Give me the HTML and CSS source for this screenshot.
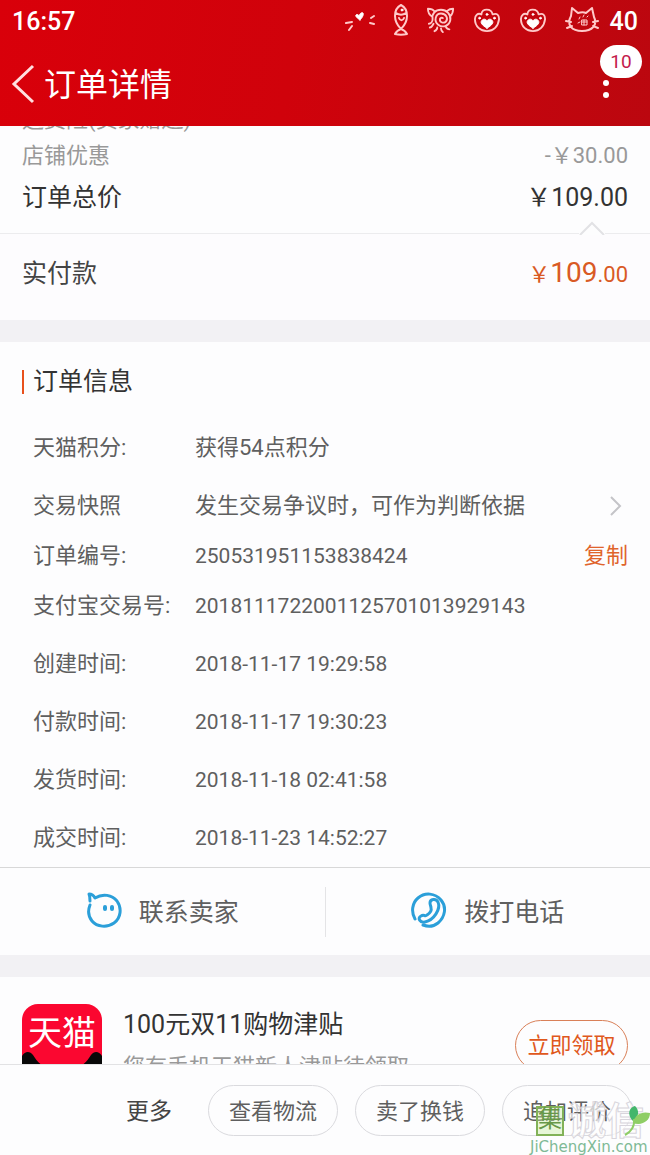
FILE: index.html
```html
<!DOCTYPE html>
<html lang="zh-CN">
<head>
<meta charset="utf-8">
<meta name="viewport" content="width=device-width, initial-scale=1">
<title>订单详情</title>
<link rel="stylesheet" href="styles.css">
</head>
<body>
<header class="top">
  <div class="status">
    <span>16:57</span>
    <div class="status-icons">
      <svg width="32" height="32" viewBox="0 0 32 32" class="doodle"><path d="M3 19l6-1M6 26l3-4M28 14l3-2M27 19l4 1"/><path class="solid" d="M17 16c-3-2-5-4-4-5 1-1 3 0 3 1 1-3 3-4 4-3 1 2-1 5-3 7z"/></svg>
      <svg width="16" height="32" viewBox="0 0 16 32" class="doodle"><path d="M8 1C4 3 2 7 2 12c0 6 3 10 6 13 3-3 6-7 6-13 0-5-2-9-6-11zM8 25c-3 1-5 3-6 5 4 1 8 1 12 0-1-2-3-4-6-5zM3 9c3 2 7 2 10 0M6 14c1 3 4 3 5 0"/><circle class="solid" cx="9" cy="6" r="1"/></svg>
      <svg width="28" height="28" viewBox="0 0 30 30" class="doodle"><path d="M8 6C6 3 4 3 1 3c0 4 1 6 4 8M22 5c2-2 4-2 6-2 0 4-1 6-3 8M6 14C5 8 9 4 15 4s11 5 10 11c-1 6-8 9-13 5-5-4-3-12 3-12 6 0 8 6 5 9-3 2-7 0-6-3 0-1 2-2 3-1M6 14c0 3-2 5-4 5M7 19c-1 2-3 4-4 4M11 23c0 2-1 3-3 4M15 24c0 2 1 3 2 4M20 22c1 2 2 3 4 3"/></svg>
      <svg width="28" height="26" viewBox="-1 -1 30 28" class="doodle"><path d="M8 7c0-7 11-7 12 0 5-2 7 1 7 5-1 8-6 13-13 13S1 20 1 12c0-4 3-7 7-5z"/><path class="solid" d="M14 22c-6-4-7-6-6-8 2-3 5-2 6 0 1-2 4-3 6 0 1 2 0 4-6 8z"/><circle class="solid" cx="6" cy="11" r="1"/><circle class="solid" cx="14" cy="7" r="1"/><circle class="solid" cx="22" cy="11" r="1"/></svg>
      <svg width="28" height="26" viewBox="-1 -1 30 28" class="doodle"><path d="M8 7c0-7 11-7 12 0 5-2 7 1 7 5-1 8-6 13-13 13S1 20 1 12c0-4 3-7 7-5z"/><path class="solid" d="M14 22c-6-4-7-6-6-8 2-3 5-2 6 0 1-2 4-3 6 0 1 2 0 4-6 8z"/><circle class="solid" cx="6" cy="11" r="1"/><circle class="solid" cx="14" cy="7" r="1"/><circle class="solid" cx="22" cy="11" r="1"/></svg>
      <svg width="34" height="28" viewBox="0 0 34 28" class="doodle"><path d="M6 10L7 2l6 5c3-1 6-1 8 0l6-5 2 9c4 8-2 14-12 14S1 19 6 10zM1 15l5 1M2 22l5-2M33 15l-5 1M33 22l-5-2"/><path class="fine" d="M17 14h5v5h-5zM17 16h5M19 14v5M13 17l2-1M14 13l1-2M18 11l1-2M22 11l1-1"/></svg>
    </div>
    <span>40</span>
  </div>
  <div class="titlebar">
    <button class="back" aria-label="返回"><svg width="24" height="40" viewBox="0 0 24 40"><path d="M22 2L3 20l19 18"/></svg></button>
    <h1>订单详情</h1>
    <button class="menu" aria-label="更多选项"><svg width="8" height="30" viewBox="0 0 8 30"><circle cx="4" cy="14" r="3"/><circle cx="4" cy="26" r="3"/></svg><span class="badge">10</span></button>
  </div>
</header>

<main class="content">
  <section class="prices">
    <div class="price minor"><span>运费险(卖家赠送)</span></div>
    <div class="price minor"><span>店铺优惠</span><span>-￥30.00</span></div>
    <div class="price total"><span>订单总价</span><span>￥109.00</span></div>
    <svg class="notch" width="26" height="14" viewBox="0 0 26 14"><path d="M1 14L13 2l12 12"/></svg>
  </section>
  <section class="paid"><span>实付款</span><span class="amount">￥<b>109</b>.00</span></section>

  <section class="info">
    <h2>订单信息</h2>
    <dl>
      <div class="row"><dt>天猫积分:</dt><dd>获得54点积分</dd></div>
      <div class="row"><dt>交易快照</dt><dd>发生交易争议时，可作为判断依据</dd><svg class="chevron" width="14" height="22" viewBox="0 0 14 22"><path d="M2 2l9 9-9 9"/></svg></div>
      <div class="row short"><dt>订单编号:</dt><dd class="num">250531951153838424</dd><dd class="action"><button class="copy">复制</button></dd></div>
      <div class="row"><dt>支付宝交易号:</dt><dd class="num">2018111722001125701013929143</dd></div>
      <div class="row"><dt>创建时间:</dt><dd class="num">2018-11-17 19:29:58</dd></div>
      <div class="row"><dt>付款时间:</dt><dd class="num">2018-11-17 19:30:23</dd></div>
      <div class="row"><dt>发货时间:</dt><dd class="num">2018-11-18 02:41:58</dd></div>
      <div class="row"><dt>成交时间:</dt><dd class="num">2018-11-23 14:52:27</dd></div>
    </dl>
  </section>

  <section class="contact">
    <button><svg width="36" height="36" viewBox="0 0 36 36"><path d="M4 13C2 18 2 24 6 29c5 6 15 7 22 2 7-5 8-15 3-22C26 3 17 1 9 6 8 4 6 2 3 2c1 2 1 4 1 7"/><path class="eyes" d="M19 15v2M26 15v2"/></svg>联系卖家</button>
    <button><svg width="36" height="36" viewBox="0 0 36 36"><path d="M4 27C0 20 1 11 7 6c7-6 17-5 23 2 6 7 4 17-3 23-5 4-10 4-15 2"/><path d="M19 11c0-4 6-5 8-1 3 7-4 18-13 20-5 1-8-4-4-6 3-2 4 1 6-1 3-2 5-4 4-7 0-2-1-3-1-5z"/></svg>拨打电话</button>
  </section>

  <section class="promo">
    <div class="app"><span>天猫</span><svg width="80" height="30" viewBox="0 0 80 30"><path d="M0 30V4c3-5 8-5 11-1 3 5 7 10 14 13h30c7-3 11-8 14-13 3-4 8-4 11 1v26z"/></svg></div>
    <div class="promo-text"><h3>100元双11购物津贴</h3><p>您有手机天猫新人津贴待领取</p></div>
    <button class="pill claim">立即领取</button>
  </section>
</main>

<footer class="actions">
  <button class="more">更多</button>
  <button class="pill">查看物流</button>
  <button class="pill">卖了换钱</button>
  <button class="pill">追加评价</button>
  <div class="watermark">
    <div class="mark"><span class="seal">集</span><span class="outline">诚信</span><svg width="30" height="32" viewBox="0 0 30 32"><path fill="#42b66b" d="M11 16C4 9 8 2 13 1c4 4 5 10-2 15z"/><path fill="#8fce66" d="M11 18C13 9 20 6 28 8c0 8-8 13-17 10z"/><path fill="none" stroke="#8fce66" stroke-width="2" d="M12 14c1 7-3 13-9 16"/></svg></div>
    <div class="site">JiChengXin.com</div>
  </div>
</footer>
</body>
</html>
```

FILE: styles.css
```css
* { box-sizing: border-box; }

body {
  margin: 0;
  height: 100vh;
  display: flex;
  flex-direction: column;
  overflow: hidden;
  background: #fdfdfe;
  color: #5f5f5f;
  font-family: Roboto, "Noto Sans CJK SC", sans-serif;
  font-size: 22px;
}

h1, h2, h3, p, dl, dd { margin: 0; font-weight: 400; }

button {
  padding: 0;
  border: 0;
  background: none;
  color: inherit;
  font: inherit;
  white-space: nowrap;
}

svg { flex: none; fill: none; }

.top {
  flex: none;
  color: #fff;
  background: linear-gradient(100deg, #d9000a, #d0020b 45%, #bb070f);
}

.status {
  display: flex;
  align-items: center;
  justify-content: space-between;
  height: 42px;
  padding: 0 12px;
  font-size: 25px;
  font-weight: 500;
}

.status-icons {
  flex: 1;
  display: flex;
  align-items: center;
  justify-content: flex-end;
  gap: 18px;
  padding: 0 11px 2px 0;
}

.doodle { stroke: #ffc9c9; stroke-width: 2; stroke-linecap: round; stroke-linejoin: round; }
.doodle .solid { fill: #fff; stroke: #fff; stroke-width: 1; }
.doodle .fine { stroke-width: 1; }

.titlebar {
  display: flex;
  align-items: center;
  height: 84px;
  padding: 0 40px 0 11px;
}

.back { display: flex; }
.back svg { stroke: #ffe0e0; stroke-width: 3; }
.titlebar h1 { flex: 1; margin-left: 9px; padding-bottom: 4px; font-size: 32px; }
.menu { position: relative; display: flex; }
.menu svg { fill: #fff; }

.badge {
  position: absolute;
  right: -32px;
  bottom: 21px;
  width: 42px;
  height: 33px;
  border-radius: 17px;
  background: #fff;
  color: #c41a4c;
  font-size: 19px;
  line-height: 33px;
}

.content { flex: 1; min-height: 0; overflow: hidden; }

.prices {
  position: relative;
  margin-top: -24px;
  padding: 0 22px 11px;
  border-bottom: 1px solid #ececee;
}

.price { display: flex; justify-content: space-between; }
.minor { color: #999; line-height: 36px; }
.total { color: #333; font-size: 25px; line-height: 48px; }

.notch {
  position: absolute;
  right: 45px;
  bottom: -2px;
  background: linear-gradient(#fdfdfe, #fdfdfe) bottom / 100% 3px no-repeat;
  stroke: #e2e2e5;
  stroke-width: 2;
}

.paid {
  display: flex;
  justify-content: space-between;
  align-items: baseline;
  height: 108px;
  padding: 0 22px;
  color: #444;
  font-size: 25px;
  line-height: 78px;
  border-bottom: 22px solid #f2f1f4;
  background: #fdfcfe;
}

.amount { color: #d95a24; font-size: 22px; }
.amount b { font-size: 28px; font-weight: 400; }

.info { padding: 22px 22px 0; border-bottom: 1px solid #d8d8d8; }

.info h2 {
  display: flex;
  align-items: center;
  gap: 9px;
  margin-bottom: 19px;
  color: #333;
  font-size: 25px;
  line-height: 36px;
}

.info h2::before { content: ""; width: 2px; height: 24px; background: #e8501c; }

.row {
  display: flex;
  align-items: baseline;
  height: 58px;
  padding-left: 11px;
  line-height: 58px;
}

.short { height: 42px; line-height: 42px; }
.row dt { flex: 0 0 162px; white-space: nowrap; }
.row dd { flex: 1; }
.row .num { font-size: 21px; }
.row .action { flex: none; }
.copy { color: #e0642c; }
.chevron { align-self: center; margin-right: 5px; stroke: #c4c4c8; stroke-width: 2; }

.contact {
  display: flex;
  align-items: center;
  height: 109px;
  border-bottom: 22px solid #f2f1f4;
}

.contact button {
  flex: 1;
  display: flex;
  align-items: center;
  justify-content: center;
  gap: 17px;
  height: 50px;
  padding-bottom: 3px;
  font-size: 25px;
}

.contact button + button { border-left: 1px solid #e4e4e6; }
.contact svg { stroke: #2b9fd9; stroke-width: 3; stroke-linecap: round; stroke-linejoin: round; }
.contact .eyes { stroke-width: 4; }

.promo { display: flex; align-items: flex-start; padding: 27px 22px; }

.app {
  display: flex;
  flex-direction: column;
  width: 80px;
  height: 80px;
  overflow: hidden;
  border-radius: 16px;
  background: #fb0730;
  color: #fff;
  font-size: 34px;
  line-height: 34px;
  text-align: center;
}

.app span { margin: 12px 0 2px; }
.app svg { fill: #080808; }
.promo-text { flex: 1; margin-left: 21px; }
.promo-text h3 { color: #333; font-size: 25px; line-height: 42px; }
.promo-text p { color: #999; line-height: 42px; }

.pill {
  flex: none;
  width: 130px;
  height: 51px;
  padding-bottom: 3px;
  border: 1px solid #dadade;
  border-radius: 26px;
}

.claim { width: 113px; margin-top: 16px; padding-bottom: 6px; border-color: #d98058; color: #e0581c; }

.actions {
  position: relative;
  flex: none;
  display: flex;
  align-items: center;
  justify-content: flex-end;
  gap: 17px;
  height: 91px;
  padding-right: 18px;
  border-top: 1px solid #e2e2e4;
  background: #fdfdfe;
}

.more { margin-right: 19px; padding-bottom: 3px; color: #444; font-size: 23px; }

.watermark { position: absolute; right: 0; bottom: 0; width: 120px; }
.mark { display: flex; align-items: center; gap: 4px; padding-left: 6px; }

.seal {
  width: 30px;
  height: 30px;
  border: 2px solid #82b258;
  background: #c5eca066;
  color: #679848;
  font-size: 24px;
  line-height: 22px;
  text-align: center;
}

.outline {
  color: #ffffffb0;
  font-size: 38px;
  font-weight: 700;
  line-height: 38px;
  white-space: nowrap;
  -webkit-text-stroke: 1px #d8d5dc;
}

.mark svg { margin-left: -26px; }
.site { color: #7fba96; font-family: "DejaVu Sans", sans-serif; font-size: 15px; line-height: 15px; }
```
